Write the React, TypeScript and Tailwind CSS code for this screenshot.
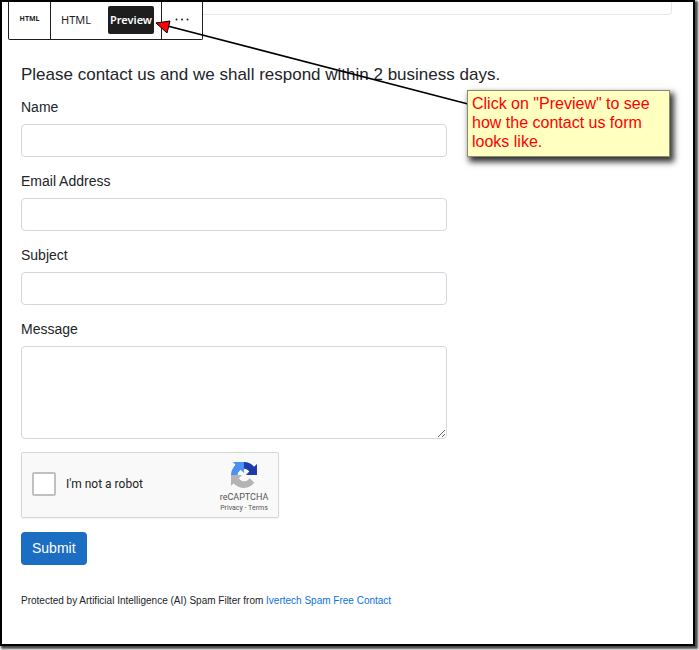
import React from 'react';

const fields = [
  { id: 'name', label: 'Name', type: 'text' },
  { id: 'email', label: 'Email Address', type: 'email' },
  { id: 'subject', label: 'Subject', type: 'text' },
];

const inputCls = 'block w-full rounded border border-[#d3d8de] bg-white px-3 text-sm outline-none';

function BlockToolbar() {
  return (
    <div
      role="toolbar"
      aria-label="Block tools"
      className="flex h-[38px] w-[195px] shrink-0 divide-x divide-[#1e1e1e] rounded-b-xs border border-t-0 border-[#1e1e1e] bg-white font-['Noto_Sans',sans-serif] text-[#1e1e1e]"
    >
      <button type="button" className="w-[42px] pb-[2px] text-[7px] font-bold">HTML</button>
      <div className="flex w-[111px] items-start pt-1">
        <button type="button" className="h-7 w-[50px] text-[11px]">HTML</button>
        <button type="button" className="mr-[7px] ml-auto h-7 w-[46px] rounded-xs bg-[#1e1e1e] text-[11px] font-semibold text-white">
          Preview
        </button>
      </div>
      <button type="button" aria-label="Options" className="flex flex-1 justify-center pt-4">
        <svg width="14" height="3" viewBox="0 0 14 3" fill="currentColor">
          <circle cx="1.5" cy="1.5" r="1" />
          <circle cx="7" cy="1.5" r="1" />
          <circle cx="12.5" cy="1.5" r="1" />
        </svg>
      </button>
    </div>
  );
}

function RecaptchaLogo() {
  return (
    <svg width="26" height="26" viewBox="0 0 64 64" aria-hidden="true">
      <path fill="#1c3aa9" d="M64 31.955a33 33 0 0 0-.037-1.374V4.687l-7.16 7.159C50.945 4.674 42.033.093 32.05.093c-10.389 0-19.618 4.96-25.442 12.64L18.342 24.59a15.55 15.55 0 0 1 4.752-5.335c2.05-1.6 4.953-2.906 8.98-2.906.487 0 .863.057 1.139.164 4.987.393 9.31 3.146 11.856 7.142l-8.306 8.306z" />
      <path fill="#4a90f5" d="M31.862.094a33 33 0 0 0-1.374.037H4.594l7.159 7.159C4.58 13.147 0 22.06 0 32.046c0 10.388 4.96 19.618 12.64 25.442l11.857-11.734a15.55 15.55 0 0 1-5.334-4.752c-1.6-2.05-2.906-4.954-2.906-8.98 0-.487.057-.863.164-1.14.393-4.987 3.146-9.31 7.142-11.855l8.306 8.306z" />
      <path fill="#b4b4b4" d="M0 32.045c.001.461.013.919.037 1.374v25.895l7.159-7.159c5.857 7.172 14.77 11.753 24.753 11.753 10.388 0 19.619-4.96 25.442-12.641L45.657 39.41a15.55 15.55 0 0 1-4.752 5.334c-2.05 1.6-4.953 2.906-8.98 2.906-.487 0-.863-.057-1.139-.164-4.987-.393-9.31-3.146-11.856-7.142l8.306-8.306z" />
    </svg>
  );
}

function Recaptcha() {
  return (
    <div className="flex h-[66px] w-[258px] items-center rounded-xs border border-[#d6d6d6] bg-[#f9f9f9] pl-[10px] font-[Roboto,sans-serif] shadow-xs">
      <input
        id="robot"
        type="checkbox"
        className="mb-[3px] size-6 shrink-0 appearance-none rounded-xs border-2 border-[#c1c1c1] bg-white"
      />
      <label htmlFor="robot" className="mb-[2px] ml-[10px] flex-1 text-[12px] text-[#222]">I'm not a robot</label>
      <div className="flex w-[66px] flex-col items-center pt-1 pr-[2px] text-[#555]">
        <RecaptchaLogo />
        <div className="mt-1 text-[9px] leading-[11px]">reCAPTCHA</div>
        <div className="text-[7px] leading-[10px]">
          <a href="#privacy">Privacy</a> - <a href="#terms">Terms</a>
        </div>
      </div>
    </div>
  );
}

function Callout() {
  return (
    <>
      <svg
        className="pointer-events-none absolute top-0 left-0"
        width="480"
        height="120"
        viewBox="0 0 480 120"
        aria-hidden="true"
      >
        <path d="M154 21 466 102" stroke="#000" strokeWidth="1.7" />
        <path d="M154 21 168 19 165 31z" fill="#f00" stroke="#000" strokeWidth="1" />
      </svg>
      <div className="absolute top-[88px] left-[465px] h-[67px] w-[203px] border border-[#8a8a72] bg-[#ffffc0] px-1 pt-[3px] text-[16px] leading-[19px] text-[#f00] shadow-[3px_4px_6px_1px_rgba(0,0,0,0.8)]">
        Click on "Preview" to see how the contact us form looks like.
      </div>
    </>
  );
}

export default function App() {
  return (
    <div className="flex min-h-screen bg-white pr-1 pb-1 font-['Liberation_Sans',Arial,sans-serif] text-[#212529]">
      <main className="relative flex-1 border-2 border-black bg-white shadow-[2px_2px_2px_1px_rgba(0,0,0,0.7)]">
        <div className="flex pl-[6px]">
          <BlockToolbar />
          <div className="mr-[21px] h-[13px] flex-1 rounded-br border-r border-b border-[#e6e6e6]" />
        </div>

        <form className="mt-[23px] px-[19px]" onSubmit={(e) => e.preventDefault()}>
          <h1 className="text-[17px] leading-6">Please contact us and we shall respond within 2 business days.</h1>

          <div className="mt-[10px] w-full max-w-[426px]">
            {fields.map((f) => (
              <div key={f.id} className="mb-[14px]">
                <label htmlFor={f.id} className="block text-sm leading-5">{f.label}</label>
                <input id={f.id} type={f.type} className={`${inputCls} mt-[7px] h-[33px]`} />
              </div>
            ))}
            <label htmlFor="message" className="block text-sm leading-5">Message</label>
            <textarea id="message" className={`${inputCls} mt-[7px] h-[93px] resize`} />
          </div>

          <div className="mt-[13px]">
            <Recaptcha />
          </div>

          <button type="submit" className="mt-[14px] h-[33px] rounded bg-[#1b6ec2] px-[11px] pb-[2px] text-sm text-white">
            Submit
          </button>

          <p className="mt-[28px] text-[10px] leading-4">
            Protected by Artificial Intelligence (AI) Spam Filter from{' '}
            <a href="#ivertech" className="text-[#0b72e0]">Ivertech Spam Free Contact</a>
          </p>
        </form>

        <Callout />
      </main>
    </div>
  );
}
